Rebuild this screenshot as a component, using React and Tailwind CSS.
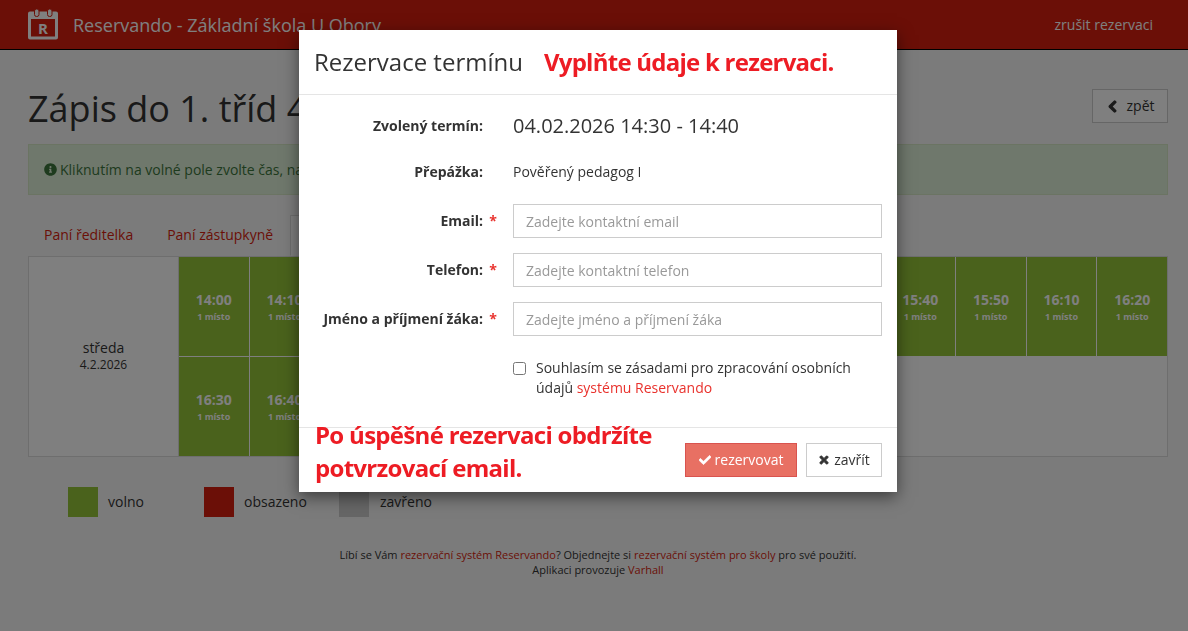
import { FaCheck, FaTimes, FaChevronLeft, FaInfoCircle } from 'react-icons/fa';

const slots = ['14:00', '14:10', '14:20', '14:30', '14:40', '14:50', '15:00', '15:10', '15:20', '15:30', '15:40', '15:50', '16:10', '16:20', '16:30', '16:40'];

const Logo = () => (
  <svg width="32" height="32" viewBox="0 0 32 32" className="shrink-0">
    <path fillRule="evenodd" fill="#fff" d="M3 2.5h26a2 2 0 0 1 2 2v24a2 2 0 0 1-2 2H3a2 2 0 0 1-2-2v-24a2 2 0 0 1 2-2zM4 10v17.5h24V10z" />
    <rect x="7.5" y="0" width="4.5" height="7.5" rx="2" fill="#fff" stroke="#d61e0e" strokeWidth="1" />
    <rect x="20.5" y="0" width="4.5" height="7.5" rx="2" fill="#fff" stroke="#d61e0e" strokeWidth="1" />
    <text x="16" y="25" textAnchor="middle" fill="#fff" fontSize="15" fontWeight="700" fontFamily="'Open Sans', sans-serif">R</text>
  </svg>
);

const FormRow = ({ label, required, children }) => (
  <div className="flex items-center">
    <div className="w-[198px] shrink-0 text-right font-bold text-sm text-[#333]">
      {label}
      {required ? <span className="text-[#e9322d] inline-block w-[14px]"> *</span> : <span className="inline-block w-[14px]" />}
    </div>
    <div className="ml-4 w-[369px]">{children}</div>
  </div>
);

const TextInput = ({ placeholder }) => (
  <input
    type="text"
    placeholder={placeholder}
    className="block w-full h-[34px] px-3 border border-[#ccc] bg-white text-sm text-[#555] placeholder:text-[#999] outline-none"
  />
);

const App = () => {
  return (
    <div className="relative h-screen overflow-hidden bg-[#f7f7f7] text-sm text-[#333] font-['Open_Sans',sans-serif]">
      {/* Header */}
      <header className="h-[50px] flex items-center justify-between bg-[#d61e0e] border-b border-black pl-[27px] pr-[35px] text-white">
        <div className="flex items-center gap-[14px]">
          <Logo />
          <span className="text-lg">Reservando - Základní škola U Obory</span>
        </div>
        <a className="text-sm">zrušit rezervaci</a>
      </header>

      <main className="pl-[28px] pr-[20px]">
        <div className="flex items-start justify-between pt-[39px] h-[94px]">
          <h1 className="text-4xl leading-[40px] font-normal">Zápis do 1. tříd 4.2.2026</h1>
          <button className="h-[34px] w-[76px] flex items-center justify-center gap-2 border border-[#ccc] bg-white text-sm">
            <FaChevronLeft size={13} stroke="currentColor" strokeWidth={50} /> zpět
          </button>
        </div>

        <div className="h-[51px] flex items-center gap-[3px] px-[15px] border border-[#d6e9c6] bg-[#dff0d8] text-[#3c763d]">
          <FaInfoCircle size={13} /> Kliknutím na volné pole zvolte čas, na který se chcete objednat.
        </div>

        {/* Tabs */}
        <div className="flex mt-5 h-[41px]">
          <a className="px-4 py-[10px] text-[#d61e0e]">Paní ředitelka</a>
          <a className="ml-px px-[17px] py-[10px] text-[#d61e0e]">Paní zástupkyně</a>
          <a className="px-[15px] py-[10px] border border-[#ddd] border-b-white bg-white">Pověřený pedagog I</a>
        </div>

        {/* Calendar */}
        <div className="flex h-[201px] bg-white border border-[#ddd]">
          <div className="w-[150px] shrink-0 border-r border-[#ddd] flex flex-col items-center justify-center pb-px">
            <span className="leading-[17px]">středa</span>
            <span className="text-xs leading-[17px]">4.2.2026</span>
          </div>
          <div className="flex-1 grid grid-cols-[repeat(14,1fr)] grid-rows-2 gap-px">
            {slots.map((time) => (
              <div key={time} className="bg-[#94c438] text-white flex flex-col items-center justify-center">
                <span className="font-bold text-sm leading-[20px]">{time}</span>
                <span className="font-bold text-[9px] leading-[13px]">1 místo</span>
              </div>
            ))}
          </div>
        </div>

        {/* Legend */}
        <div className="flex items-center mt-[30px] ml-[40px]">
          <div className="w-[30px] h-[30px] bg-[#94c438]" />
          <span className="ml-[10px] w-[96px]">volno</span>
          <div className="w-[30px] h-[30px] bg-[#d61e0e]" />
          <span className="ml-[10px] w-[95px]">obsazeno</span>
          <div className="w-[30px] h-[30px] bg-[#cdcdcd]" />
          <span className="ml-[11px]">zavřeno</span>
        </div>

        <footer className="mt-[30px] text-center text-[11px] leading-[15px]">
          <p>Líbí se Vám <a className="text-[#d61e0e]">rezervační systém Reservando</a>? Objednejte si <a className="text-[#d61e0e]">rezervační systém pro školy</a> pro své použití.</p>
          <p>Aplikaci provozuje <a className="text-[#d61e0e]">Varhall</a></p>
        </footer>
      </main>

      {/* Backdrop */}
      <div className="fixed inset-0 bg-black/50" />

      {/* Modal */}
      <div className="absolute top-[30px] left-[299px] w-[598px] h-[462px] bg-white flex flex-col shadow-[0_5px_15px_rgba(0,0,0,0.5)]">
        <div className="h-[65px] shrink-0 flex items-center gap-[21px] px-[15px] border-b border-[#e5e5e5]">
          <h4 className="text-2xl text-[#333] font-normal">Rezervace termínu</h4>
          <span className="text-2xl tracking-[-0.75px] font-bold text-[#ed1c24]">Vyplňte údaje k rezervaci.</span>
        </div>

        <div className="flex-1 flex flex-col pt-[19px]">
          <FormRow label="Zvolený termín:">
            <span className="block text-xl leading-[24px]">04.02.2026 14:30 - 14:40</span>
          </FormRow>
          <div className="mt-6">
            <FormRow label="Přepážka:">
              <span className="block leading-[20px]">Pověřený pedagog I</span>
            </FormRow>
          </div>
          <div className="mt-[22px] flex flex-col gap-[15px]">
            <FormRow label="Email:" required><TextInput placeholder="Zadejte kontaktní email" /></FormRow>
            <FormRow label="Telefon:" required><TextInput placeholder="Zadejte kontaktní telefon" /></FormRow>
            <FormRow label="Jméno a příjmení žáka:" required><TextInput placeholder="Zadejte jméno a příjmení žáka" /></FormRow>
          </div>
          <label className="flex items-start ml-[214px] mt-[22px] w-[345px] leading-[20px]">
            <input type="checkbox" className="mt-1 w-[13px] h-[13px] shrink-0" />
            <span className="ml-[10px]">Souhlasím se zásadami pro zpracování osobních údajů <a className="text-[#e9322d]">systému Reservando</a></span>
          </label>
        </div>

        <div className="h-[65px] shrink-0 flex items-start justify-between border-t border-[#e5e5e5] pl-4 pr-[15px]">
          <p className="text-2xl tracking-[-0.7px] font-bold leading-[33px] text-[#ed1c24] -mt-[10px]">Po úspěšné rezervaci obdržíte<br />potvrzovací email.</p>
          <div className="flex gap-[9px] pt-[15px]">
            <button className="h-[34px] w-[112px] flex items-center justify-center gap-1 border border-[#d9534f] bg-[#e87063] text-white text-sm">
              <FaCheck size={12} stroke="currentColor" strokeWidth={25} /> rezervovat
            </button>
            <button className="h-[34px] w-[76px] flex items-center justify-center gap-1 border border-[#ccc] bg-white text-sm">
              <FaTimes size={12} stroke="currentColor" strokeWidth={40} /> zavřít
            </button>
          </div>
        </div>
      </div>
    </div>
  );
};

export default App;
